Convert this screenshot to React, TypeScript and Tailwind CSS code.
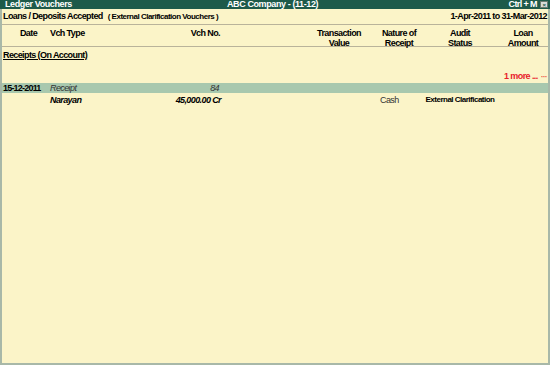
import React from "react";

const F = { fontFamily: '"Liberation Sans", Arial, sans-serif' };

export default function App() {
  return (
    <div className="w-[550px] h-[365px] bg-[#fbf4c8] flex flex-col text-black overflow-hidden tracking-[-0.6px]" style={F}>
      {/* title bar */}
      <div className="h-[9px] bg-[#1d5a4a] flex items-center text-white font-bold text-[9px] leading-none relative">
        <span className="pl-[5px] tracking-[-0.4px]">Ledger Vouchers</span>
        <span className="absolute left-[227px] tracking-[-0.4px]">ABC Company - (11-12)</span>
        <span className="ml-auto mr-[2px] flex items-center gap-[3px]">
          Ctrl + M
          <span className="w-[8px] h-[7px] bg-[#d8dcd8] border border-[#6b7b70] flex items-center justify-center text-[#1d5a4a] text-[6px] leading-none">×</span>
        </span>
      </div>
      <div className="flex-1 flex flex-col border-x-2 border-b-2 border-[#a8b8a8]">
        {/* company row */}
        <div className="h-[15px] flex items-center text-[9px] font-bold leading-none">
          <span className="pl-[1px]">Loans / Deposits Accepted</span>
          <span className="pl-[5px] text-[8px] tracking-[-0.5px]">( External Clarification Vouchers )</span>
          <span className="ml-auto pr-[1px]">1-Apr-2011 to 31-Mar-2012</span>
        </div>
        {/* header */}
        <div className="h-[23px] border-y border-[#b9b39a] flex items-start pt-[3px] text-[9px] font-bold leading-[10px]">
          <div className="w-[45px] pl-[8px] text-center">Date</div>
          <div className="w-[103px] pl-[3px]">Vch Type</div>
          <div className="w-[72px] text-right pr-[2px]">Vch No.</div>
          <div className="w-[80px]"></div>
          <div className="w-[74px] text-center">Transaction<br />Value</div>
          <div className="w-[46px] text-center">Nature of<br />Receipt</div>
          <div className="w-[76px] text-center">Audit<br />Status</div>
          <div className="w-[50px] text-center">Loan<br />Amount</div>
        </div>
        <div className="h-[3px]"></div>
        <div className="h-[10px] flex items-center text-[9px] font-bold leading-none">
          <span className="pl-[1px] underline underline-offset-1">Receipts (On Account)</span>
        </div>
        <div className="h-[11px]"></div>
        <div className="h-[10px] flex items-center justify-end pr-[2px] text-[9px] font-bold leading-none text-[#e8202a]">
          1 more ... <span className="ml-[3px] text-[6px]">⋯</span>
        </div>
        <div className="h-[2px]"></div>
        {/* highlighted row */}
        <div className="h-[10px] bg-[#a8c8ae] flex items-center text-[9px] leading-none">
          <div className="w-[45px] pl-[1px] font-bold tracking-[-0.8px]">15-12-2011</div>
          <div className="w-[103px] pl-[3px] italic text-[#333]">Receipt</div>
          <div className="w-[72px] text-right pr-[3px] italic text-[#333]">84</div>
        </div>
        <div className="h-[2px]"></div>
        <div className="h-[10px] flex items-center text-[9px] leading-none">
          <div className="w-[45px]"></div>
          <div className="w-[103px] pl-[3px] italic font-bold">Narayan</div>
          <div className="w-[72px] text-right pr-[1px] italic font-bold">45,000.00 Cr</div>
          <div className="w-[80px]"></div>
          <div className="w-[74px]"></div>
          <div className="w-[46px] pl-[4px] text-[#333]">Cash</div>
          <div className="w-[76px] text-center font-bold text-[8px] tracking-[-0.5px]">External Clarification</div>
        </div>
      </div>
    </div>
  );
}
